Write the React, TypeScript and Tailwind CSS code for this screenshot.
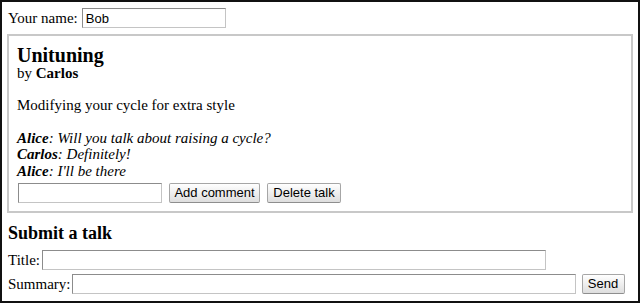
const serif = { fontFamily: '"Liberation Serif", "Times New Roman", serif' };

function TextInput({ className = '', value }: { className?: string; value?: string }) {
  return (
    <input
      type="text"
      defaultValue={value}
      className={`h-[20px] border border-t-[#8c8c8c] border-l-[#8c8c8c] border-r-[#c4c4c4] border-b-[#c4c4c4] bg-white px-[3px] text-[13px] text-black font-['Liberation_Sans',Arial,sans-serif] outline-none ${className}`}
    />
  );
}

function Button({ children, className = '' }: { children: React.ReactNode; className?: string }) {
  return (
    <button className={`h-[20px] rounded-[2px] border border-[#a6a6a6] border-b-[#8e8e8e] bg-gradient-to-b from-white to-[#dedede] text-center text-[13px] leading-[18px] text-black font-['Liberation_Sans',Arial,sans-serif] ${className}`}>
      {children}
    </button>
  );
}

const comments = [
  { author: 'Alice', message: 'Will you talk about raising a cycle?' },
  { author: 'Carlos', message: 'Definitely!' },
  { author: 'Alice', message: "I'll be there" },
];

export default function App() {
  return (
    <div
      className="box-border flex h-[303px] w-[640px] flex-col border-2 border-[#111] bg-white px-[5px] pt-[6px] text-[15px] text-black"
      style={serif}
    >
      <div className="flex h-[20px] items-center gap-[4px] pl-[1px]">
        <span>Your name:</span>
        <TextInput className="w-[144px]" value="Bob" />
      </div>

      {/* talk */}
      <div className="mt-[6px] border-2 border-[#c8c8c8] px-[8px] pb-[8px] pt-[9px]">
        <h2 className="text-[20px] font-bold leading-[20px]">Unituning</h2>
        <div className="leading-[16px]">
          by <strong>Carlos</strong>
        </div>
        <p className="mt-[16px] leading-[16.5px]">Modifying your cycle for extra style</p>

        <div className="mt-[16px] italic leading-[16.5px]">
          {comments.map((c, i) => (
            <div key={i}>
              <strong>{c.author}</strong>: {c.message}
            </div>
          ))}
        </div>

        <div className="mt-[4px] flex items-center pl-[1px]">
          <TextInput className="w-[144px]" />
          <Button className="ml-[7px] w-[91px]">Add comment</Button>
          <Button className="ml-[7px] w-[74px]">Delete talk</Button>
        </div>
      </div>

      <h3 className="mt-[10px] pl-[1px] text-[18px] font-bold leading-[21px]">Submit a talk</h3>
      <div className="mt-[6px] flex h-[20px] items-center gap-[2px] pl-[1px]">
        <span>Title:</span>
        <TextInput className="w-[504px]" />
      </div>
      <div className="mt-[4px] flex h-[20px] items-center gap-[1px] pl-[1px]">
        <span>Summary:</span>
        <TextInput className="w-[504px]" />
        <Button className="ml-[5px] w-[43px]">Send</Button>
      </div>
    </div>
  );
}
